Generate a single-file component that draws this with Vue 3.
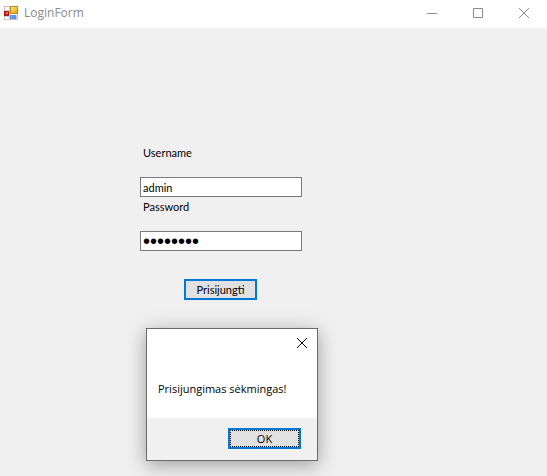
<script setup>
import { ref } from 'vue'

const username = ref('admin')
const password = ref('slaptas1')
const dialogOpen = ref(true)
</script>

<template>
  <div class="window">
    <header class="titlebar">
      <svg class="app-icon" viewBox="0 0 14 14" aria-hidden="true">
        <defs>
          <linearGradient id="gold" x1="0" y1="0" x2="1" y2="1">
            <stop offset="0" stop-color="#ffeb8a" />
            <stop offset="1" stop-color="#e5a100" />
          </linearGradient>
          <linearGradient id="blue" x1="0" y1="0" x2="1" y2="1">
            <stop offset="0" stop-color="#8dbcff" />
            <stop offset="1" stop-color="#2f73dc" />
          </linearGradient>
        </defs>
        <rect x="0.5" y="0.5" width="13" height="13" fill="#fff" stroke="#c4c4c4" />
        <path d="M5.5 1V13M1 4.5H5M1 10.5H5M12.5 9V13" stroke="#d0d0d0" fill="none" />
        <rect x="6.5" y="0.5" width="7" height="7" fill="url(#gold)" stroke="#c08a10" />
        <rect x="0.5" y="5.5" width="4" height="4" fill="#d8231a" stroke="#b01812" />
        <rect x="2" y="6" width="2" height="2" fill="#ee6a5c" />
        <rect x="6.5" y="9.5" width="5" height="3" fill="url(#blue)" stroke="#5b93e6" />
      </svg>
      <h1 class="title">LoginForm</h1>
      <div class="controls">
        <button type="button" class="control" aria-label="Minimize">
          <svg viewBox="0 0 10 10"><path d="M0 5.5H10" /></svg>
        </button>
        <button type="button" class="control" aria-label="Maximize">
          <svg viewBox="0 0 10 10"><path d="M0.5 0.5H9.5V9.5H0.5Z" /></svg>
        </button>
        <button type="button" class="control" aria-label="Close">
          <svg viewBox="0 0 10 10"><path d="M0 0L10 10M10 0L0 10" /></svg>
        </button>
      </div>
    </header>

    <main class="content">
      <form class="form" @submit.prevent="dialogOpen = true">
        <label for="username">Username</label>
        <input id="username" v-model="username" type="text" autocomplete="off" />
        <label for="password">Password</label>
        <input id="password" v-model="password" class="secret" type="password" autocomplete="off" />
        <button type="submit" class="button submit">Prisijungti</button>
      </form>

      <section v-if="dialogOpen" class="dialog" role="dialog" aria-labelledby="message">
        <div class="dialog-top">
          <button type="button" class="dialog-close" aria-label="Close" @click="dialogOpen = false">
            <svg viewBox="0 0 10 10"><path d="M0 0L10 10M10 0L0 10" /></svg>
          </button>
        </div>
        <p id="message" class="message">Prisijungimas sėkmingas!</p>
        <footer class="dialog-footer">
          <button type="button" class="button ok" @click="dialogOpen = false">OK</button>
        </footer>
      </section>
    </main>
  </div>
</template>

<style>
body {
  background: #f0f0f0;
}
</style>

<style scoped>
* {
  box-sizing: border-box;
}

.window {
  display: flex;
  flex-direction: column;
  min-height: 100vh;
  font-family: Lato, "Liberation Sans", sans-serif;
  font-size: 11px;
  color: #000;
}

.titlebar {
  display: flex;
  align-items: center;
  height: 28px;
  padding-left: 4px;
  padding-bottom: 3px;
  background: #fff;
}

.app-icon {
  width: 14px;
  height: 14px;
}

.title {
  flex: 1;
  margin: 0 0 0 6px;
  font: 400 12px/16px "Open Sans", sans-serif;
  color: #8c8c8c;
}

.controls {
  display: flex;
}

.control {
  display: flex;
  align-items: center;
  justify-content: center;
  width: 46px;
  height: 24px;
  padding: 0;
  border: 0;
  background: none;
}

.control svg,
.dialog-close svg {
  width: 10px;
  height: 10px;
  fill: none;
  stroke: #8c8c8c;
  overflow: visible;
}

.content {
  position: relative;
  flex: 1;
  padding: 117px 20px 20px 140px;
  background: #f0f0f0;
}

.form {
  display: flex;
  flex-direction: column;
  max-width: 162px;
}

label {
  height: 32px;
  padding-left: 3px;
  line-height: 15px;
}

input {
  width: 100%;
  height: 20px;
  margin: 0 0 2px;
  padding: 0 2px;
  border: 1px solid #7a7a7a;
  border-radius: 0;
  outline: 0;
  background: #fff;
  font: inherit;
  color: #000;
}

.secret {
  font: 20px "Liberation Sans", sans-serif;
}

.button {
  width: 73px;
  height: 21px;
  padding: 0;
  border: 2px solid #0078d7;
  border-radius: 0;
  background: #e1e1e1;
  font: inherit;
  color: #000;
}

.submit {
  margin: 26px 0 0 44px;
}

.dialog {
  position: absolute;
  top: 300px;
  left: 146px;
  display: flex;
  flex-direction: column;
  width: 172px;
  border: 1px solid #6b6b6b;
  background: #fff;
  box-shadow: 0 4px 18px rgba(0, 0, 0, 0.35);
  font: 400 11px/16px "Open Sans", sans-serif;
}

.dialog-top {
  display: flex;
  justify-content: flex-end;
  padding: 9px 10px 0 0;
}

.dialog-close {
  display: flex;
  padding: 0;
  border: 0;
  background: none;
}

.dialog-close svg {
  stroke: #000;
}

.message {
  margin: 0;
  padding: 33px 11px 21px;
  white-space: nowrap;
}

.dialog-footer {
  display: flex;
  justify-content: flex-end;
  padding: 10px 16px 11px;
  background: #f0f0f0;
}

.ok {
  outline: 1px dotted #000;
  outline-offset: -3px;
}
</style>
